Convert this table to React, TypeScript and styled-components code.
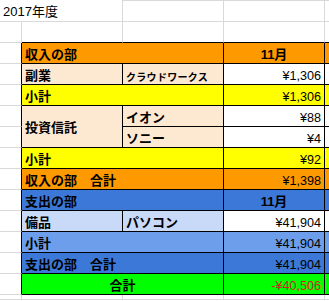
import React from "react";
import styled, { createGlobalStyle } from "styled-components";

const Global = createGlobalStyle`
  html, body { margin: 0; padding: 0; background: #ffffff; }
  body { font-family: "Liberation Sans", Arial, "Noto Sans CJK JP", sans-serif; }
`;

const GRID = "#d9d9d9";
const INK = "#000000";

const C = {
  orange: "#ff9900",
  peach: "#fde9d2",
  yellow: "#ffff00",
  blue: "#3c78d8",
  blueMid: "#6d9eeb",
  bluePale: "#c9daf8",
  green: "#00ff00",
  white: "#ffffff",
};

const Sheet = styled.div`
  display: grid;
  grid-template-columns: 22px 101px 101px 101px 1fr;
  grid-template-rows: 22px repeat(13, 21px) 5px;
  width: 329px;
  height: 301px;
  overflow: hidden;
  font-family: "Liberation Sans", Arial, "Noto Sans CJK JP", sans-serif;
  color: #000;
`;

/* plain spreadsheet cell with light gridlines */
const GridCell = styled.div<{ $top?: boolean; $bottom?: string }>`
  box-sizing: border-box;
  background: #fff;
  border-right: 1px solid ${GRID};
  border-bottom: 1px solid ${(p) => p.$bottom ?? GRID};
  border-top: ${(p) => (p.$top ? `1px solid ${GRID}` : "none")};
`;

/* column A gutter cell; $edge draws the table's left border */
const Gutter = styled.div<{ $edge?: boolean }>`
  box-sizing: border-box;
  background: #fff;
  border-right: 1px solid ${(p) => (p.$edge ? INK : GRID)};
  border-bottom: 1px solid ${GRID};
`;

const Title = styled.div`
  grid-column: span 2;
  box-sizing: border-box;
  border-right: 1px solid ${GRID};
  border-bottom: 1px solid ${GRID};
  padding: 3px 0 0 3px;
  display: flex;
  align-items: center;
  font-size: 13px;
  line-height: 16px;
  white-space: nowrap;
`;

/* a cell inside the black-ruled table */
const TableCell = styled.div<{ $bg: string; $span?: number; $rows?: number }>`
  box-sizing: border-box;
  min-width: 0;
  display: flex;
  align-items: center;
  padding: 3px 3px 0 3px;
  background: ${(p) => p.$bg};
  border-right: 1px solid ${INK};
  border-bottom: 1px solid ${INK};
  grid-column: span ${(p) => p.$span ?? 1};
  grid-row: span ${(p) => p.$rows ?? 1};
  line-height: 16px;
  white-space: nowrap;
  overflow: hidden;
`;

const Label = styled(TableCell)<{ $center?: boolean }>`
  justify-content: ${(p) => (p.$center ? "center" : "flex-start")};
  font-size: 13px;
  font-weight: 700;
`;

const SmallItem = styled(TableCell)`
  font-size: 10px;
  letter-spacing: 0.3px;
  font-weight: 700;
  padding-top: 7px;
`;

const Month = styled(TableCell)`
  justify-content: center;
  font-size: 13px;
  font-weight: 700;
`;

const Value = styled(TableCell)<{ $neg?: boolean }>`
  justify-content: flex-end;
  font-size: 12.6px;
  color: ${(p) => (p.$neg ? "#d82020" : "#000")};
`;

const Blank = styled(TableCell)``;

export default function App() {
  return (
    <>
      <Global />
      <Sheet>
        {/* row 1 */}
        <Title>2017年度</Title>
        <GridCell $top />
        <GridCell $top />
        <GridCell $top />

        {/* row 2 */}
        <Gutter />
        <GridCell $bottom={INK} />
        <GridCell $bottom={INK} />
        <GridCell $bottom={INK} />
        <GridCell $bottom={INK} />

        {/* 収入の部 */}
        <Gutter $edge />
        <Label $bg={C.orange} $span={2}>収入の部</Label>
        <Month $bg={C.orange}>11月</Month>
        <Blank $bg={C.orange} />

        <Gutter $edge />
        <Label $bg={C.peach}>副業</Label>
        <SmallItem $bg={C.peach}>クラウドワークス</SmallItem>
        <Value $bg={C.white}>¥1,306</Value>
        <Blank $bg={C.white} />

        <Gutter $edge />
        <Label $bg={C.yellow} $span={2}>小計</Label>
        <Value $bg={C.yellow}>¥1,306</Value>
        <Blank $bg={C.yellow} />

        <Gutter $edge />
        <Label $bg={C.peach} $rows={2}>投資信託</Label>
        <Label $bg={C.peach}>イオン</Label>
        <Value $bg={C.white}>¥88</Value>
        <Blank $bg={C.white} />

        <Gutter $edge />
        <Label $bg={C.peach}>ソニー</Label>
        <Value $bg={C.white}>¥4</Value>
        <Blank $bg={C.white} />

        <Gutter $edge />
        <Label $bg={C.yellow} $span={2}>小計</Label>
        <Value $bg={C.yellow}>¥92</Value>
        <Blank $bg={C.yellow} />

        <Gutter $edge />
        <Label $bg={C.orange} $span={2}>収入の部　合計</Label>
        <Value $bg={C.orange}>¥1,398</Value>
        <Blank $bg={C.orange} />

        {/* 支出の部 */}
        <Gutter $edge />
        <Label $bg={C.blue} $span={2}>支出の部</Label>
        <Month $bg={C.blue}>11月</Month>
        <Blank $bg={C.blue} />

        <Gutter $edge />
        <Label $bg={C.bluePale}>備品</Label>
        <Label $bg={C.bluePale}>パソコン</Label>
        <Value $bg={C.white}>¥41,904</Value>
        <Blank $bg={C.white} />

        <Gutter $edge />
        <Label $bg={C.blueMid} $span={2}>小計</Label>
        <Value $bg={C.blueMid}>¥41,904</Value>
        <Blank $bg={C.blueMid} />

        <Gutter $edge />
        <Label $bg={C.blue} $span={2}>支出の部　合計</Label>
        <Value $bg={C.blue}>¥41,904</Value>
        <Blank $bg={C.blue} />

        {/* 合計 */}
        <Gutter $edge />
        <Label $bg={C.green} $span={2} $center>合計</Label>
        <Value $bg={C.green} $neg>-¥40,506</Value>
        <Blank $bg={C.green} />

        {/* trailing row */}
        <Gutter />
        <GridCell />
        <GridCell />
        <GridCell />
        <GridCell />
      </Sheet>
    </>
  );
}
